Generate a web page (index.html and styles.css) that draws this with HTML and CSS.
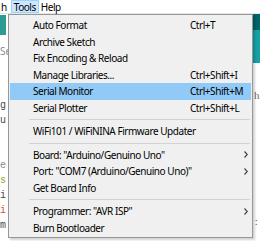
FILE: index.html
```html
<!DOCTYPE html>
<html lang="en">
<head>
  <meta charset="UTF-8" />
  <title>Tools menu</title>
  <link rel="stylesheet" href="styles.css">
</head>
<body>
  <div class="screen">
    <div class="menubar">
      <span class="menu-item cut">h</span>
      <span class="menu-item active">Tools</span>
      <span class="menu-item">Help</span>
    </div>

    <div class="workspace">
      <div class="edge-left">
        <div class="tool-btn"></div>
        <div class="code-line faint first">Se</div>
        <div class="code-block">
          <div class="code-line">g:</div>
          <div class="code-line">u:</div>
          <div class="code-line blank"></div>
          <div class="code-line blank"></div>
          <div class="code-line faint">e</div>
          <div class="code-line olive">s</div>
          <div class="code-line">i</div>
          <div class="code-line orange">i.</div>
          <div class="code-line">m.</div>
        </div>
      </div>
      <div class="editor"></div>
      <div class="edge-right">
        <div class="toolbar"></div>
        <div class="tabs"></div>
        <div class="serial-text">h</div>
        <div class="serial-dots">:</div>
      </div>
    </div>

    <ul class="dropdown">
      <li class="item"><span>Auto Format</span><span class="key">Ctrl+T</span></li>
      <li class="item"><span>Archive Sketch</span></li>
      <li class="item"><span>Fix Encoding &amp; Reload</span></li>
      <li class="item"><span>Manage Libraries...</span><span class="key">Ctrl+Shift+I</span></li>
      <li class="item selected"><span>Serial Monitor</span><span class="key">Ctrl+Shift+M</span></li>
      <li class="item"><span>Serial Plotter</span><span class="key">Ctrl+Shift+L</span></li>
      <li class="sep"></li>
      <li class="item"><span>WiFi101 / WiFiNINA Firmware Updater</span></li>
      <li class="sep"></li>
      <li class="item"><span>Board: "Arduino/Genuino Uno"</span><span class="key"></span><svg class="arrow" width="4" height="7" viewBox="0 0 4 7"><polyline points="0.5,0.5 3.3,3.5 0.5,6.5" fill="none" stroke="#3c3c3c" stroke-width="1.1"/></svg></li>
      <li class="item"><span>Port: "COM7 (Arduino/Genuino Uno)"</span><span class="key"></span><svg class="arrow" width="4" height="7" viewBox="0 0 4 7"><polyline points="0.5,0.5 3.3,3.5 0.5,6.5" fill="none" stroke="#3c3c3c" stroke-width="1.1"/></svg></li>
      <li class="item"><span>Get Board Info</span></li>
      <li class="sep"></li>
      <li class="item"><span>Programmer: "AVR ISP"</span><span class="key"></span><svg class="arrow" width="4" height="7" viewBox="0 0 4 7"><polyline points="0.5,0.5 3.3,3.5 0.5,6.5" fill="none" stroke="#3c3c3c" stroke-width="1.1"/></svg></li>
      <li class="item"><span>Burn Bootloader</span></li>
    </ul>
  </div>
</body>
</html>
```

FILE: styles.css
```css
* {
  margin: 0;
  padding: 0;
  box-sizing: border-box;
}

body {
  background: #ffffff;
  font-family: 'Noto Sans', 'Open Sans', sans-serif;
  font-size: 10px;
  letter-spacing: -0.45px;
  color: #000;
}

.screen {
  position: relative;
  width: 260px;
  height: 241px;
  overflow: hidden;
  display: flex;
  flex-direction: column;
}

/* menu bar */
.menubar {
  display: flex;
  height: 14px;
  background: #fff;
  border-bottom: 1px solid #e6e6e6;
}

.menu-item {
  display: flex;
  align-items: center;
  padding: 0 2px;
  line-height: 12px;
}

.menu-item.cut {
  padding: 0 4px 0 1px;
}

.menu-item.active {
  background: #cce8ff;
  border: 1px solid #99d1ff;
  padding: 0 2px;
}

/* editor behind the menu */
.workspace {
  flex: 1;
  display: flex;
}

.edge-left {
  width: 8px;
  display: flex;
  flex-direction: column;
}

.tool-btn {
  width: 6px;
  height: 20px;
  margin-top: 1px;
  background: #2f9c94;
}

.code-line {
  font-family: 'Liberation Mono', monospace;
  font-size: 10px;
  letter-spacing: 0;
  height: 15px;
  line-height: 15px;
  color: #4a4a4a;
  white-space: nowrap;
}

.code-line.first {
  margin-top: 9px;
  font-family: 'Noto Sans', sans-serif;
  color: #9a9a9a;
}

.code-block {
  margin-top: 39px;
}

.code-line.faint { color: #8a8a8a; }
.code-line.olive { color: #9ca12c; }
.code-line.orange { color: #d2541e; }

.editor {
  flex: 1;
}

.edge-right {
  width: 7px;
  display: flex;
  flex-direction: column;
}

.toolbar {
  height: 16px;
  background: #006468;
}

.tabs {
  height: 33px;
  background: #17a1a5;
}

.serial-text {
  margin-top: 26px;
  font-family: 'Liberation Serif', serif;
  font-size: 11px;
  color: #6a6a6a;
  padding-left: 1px;
}

.serial-dots {
  margin-top: 114px;
  font-size: 9px;
  color: #444;
  padding-left: 2px;
}

/* the dropdown */
.dropdown {
  position: absolute;
  left: 8px;
  top: 14px;
  width: 245px;
  height: 224px;
  list-style: none;
  background: #f0f0f0;
  border: 1px solid #979797;
  padding: 2px 1px;
  box-shadow: 2px 2px 2px rgba(0, 0, 0, 0.18);
}

.item {
  display: grid;
  grid-template-columns: 157px 1fr 14px;
  align-items: center;
  height: 16.5px;
  padding-left: 23px;
  white-space: nowrap;
}

.item.selected {
  background: #91c9f7;
}

.key {
  grid-column: 2;
}

.arrow {
  grid-column: 3;
  justify-self: end;
  margin-right: 3px;
}

.sep {
  height: 7px;
  margin-left: 19px;
  margin-right: 1px;
  display: flex;
  align-items: center;
}

.sep::before {
  content: "";
  flex: 1;
  border-top: 1px solid #d2d2d2;
}
```
